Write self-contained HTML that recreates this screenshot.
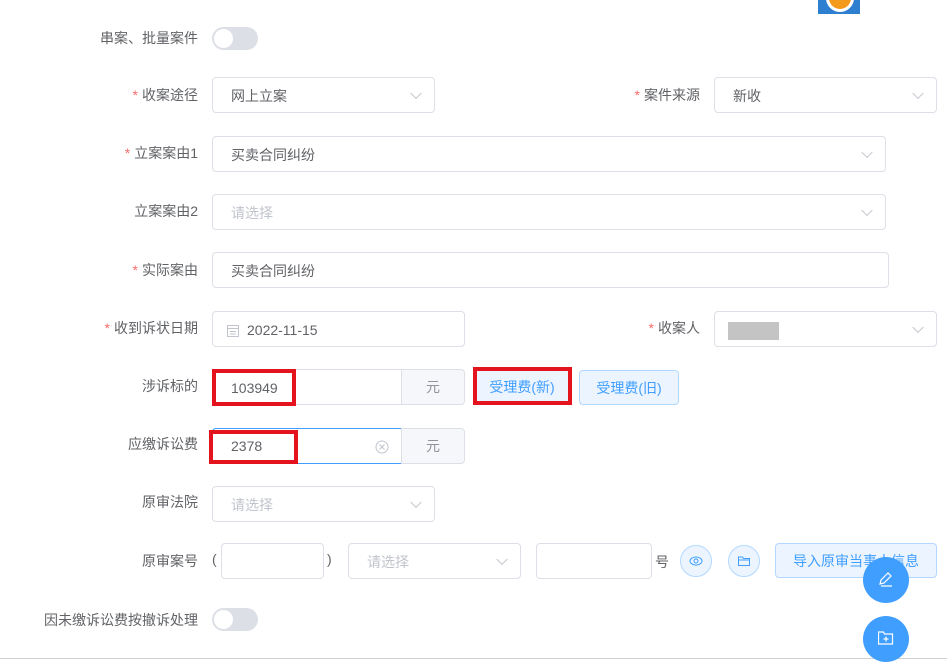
<!DOCTYPE html>
<html><head><meta charset="utf-8"><style>
*{box-sizing:border-box;margin:0;padding:0}
body{width:947px;height:661px;overflow:hidden;background:#fff;position:relative;font-family:"Liberation Sans","Noto Sans CJK SC",sans-serif;font-size:14px;color:#606266}
.a{position:absolute}
.lbl{position:absolute;text-align:right;width:190px;left:8px;color:#606266;font-size:14px}
.lbl i{color:#f56c6c;font-style:normal;margin-right:4px}
.in{position:absolute;border:1px solid #dcdfe6;border-radius:4px;background:#fff;padding-left:18px;padding-top:2px;display:flex;align-items:center;color:#606266}
.ph{color:#c0c4cc}
.arr{position:absolute;right:14px;top:50%;width:8px;height:8px;border-right:1px solid #c0c4cc;border-bottom:1px solid #c0c4cc;transform:translateY(-70%) rotate(45deg)}
.tg{position:absolute;width:46px;height:23px;border-radius:12px;background:#dcdfe6}
.tg:after{content:"";position:absolute;left:2px;top:2px;width:19px;height:19px;border-radius:50%;background:#fff}
.add{position:absolute;background:#f5f7fa;border:1px solid #dcdfe6;border-radius:0 4px 4px 0;display:flex;align-items:center;justify-content:center;color:#909399}
.btn{position:absolute;background:#ecf5ff;border:1px solid #b3d8ff;border-radius:4px;color:#409eff;display:flex;align-items:center;justify-content:center}
.red{position:absolute;border:4px solid #e4141e}
.cb{position:absolute;width:32px;height:32px;border-radius:50%;background:#ecf5ff;border:1px solid #b3d8ff}
.fab{position:absolute;width:46px;height:46px;border-radius:50%;background:#409eff}
</style></head><body>
<div class="a" style="left:818px;top:0;width:42px;height:14px;background:#2f7fd0;overflow:hidden"><div class="a" style="left:8px;top:-16px;width:28px;height:28px;border-radius:50%;background:#f39a1c;border:3px solid #fff"></div></div>

<div class="lbl" style="top:28px">串案、批量案件</div>
<div class="tg" style="left:212px;top:27px"></div>

<div class="lbl" style="top:85px"><i>*</i>收案途径</div>
<div class="in" style="left:212px;top:77px;width:223px;height:36px">网上立案<span class="arr"></span></div>
<div class="lbl" style="top:85px;left:510px"><i>*</i>案件来源</div>
<div class="in" style="left:714px;top:77px;width:223px;height:36px">新收<span class="arr"></span></div>

<div class="lbl" style="top:143px"><i>*</i>立案案由1</div>
<div class="in" style="left:212px;top:136px;width:674px;height:36px">买卖合同纠纷<span class="arr"></span></div>

<div class="lbl" style="top:201px">立案案由2</div>
<div class="in" style="left:212px;top:194px;width:674px;height:36px"><span class="ph">请选择</span><span class="arr"></span></div>

<div class="lbl" style="top:260px"><i>*</i>实际案由</div>
<div class="in" style="left:212px;top:252px;width:677px;height:36px">买卖合同纠纷</div>

<div class="lbl" style="top:318px"><i>*</i>收到诉状日期</div>
<div class="in" style="left:212px;top:311px;width:253px;height:36px;padding-left:14px"><svg width="12" height="13" style="margin-right:8px"><rect x="0.5" y="1.5" width="11" height="11" fill="none" stroke="#c0c4cc"/><line x1="0" y1="4.5" x2="12" y2="4.5" stroke="#c0c4cc"/><line x1="3" y1="7.5" x2="9" y2="7.5" stroke="#c0c4cc"/><line x1="3" y1="10" x2="9" y2="10" stroke="#c0c4cc"/></svg>2022-11-15</div>
<div class="lbl" style="top:318px;left:510px"><i>*</i>收案人</div>
<div class="in" style="left:714px;top:311px;width:223px;height:36px"><span class="arr"></span></div>
<div class="a" style="left:728px;top:322px;width:51px;height:18px;background:#c4c4c4"></div>

<div class="lbl" style="top:376px">涉诉标的</div>
<div class="in" style="left:212px;top:369px;width:190px;height:36px;border-radius:4px 0 0 4px">103949</div>
<div class="add" style="left:401px;top:369px;width:64px;height:36px">元</div>
<div class="btn" style="left:473px;top:370px;width:98px;height:34px">受理费(新)</div>
<div class="btn" style="left:579px;top:370px;width:100px;height:35px">受理费(旧)</div>
<div class="red" style="left:212px;top:369px;width:84px;height:37px"></div>
<div class="red" style="left:473px;top:367px;width:99px;height:38px"></div>

<div class="lbl" style="top:434px">应缴诉讼费</div>
<div class="in" style="left:212px;top:428px;width:190px;height:36px;border-color:#409eff;border-radius:4px 0 0 4px;padding-top:0">2378<svg class="a" style="left:162px;top:11px" width="14" height="14"><circle cx="7" cy="7" r="6" fill="none" stroke="#c0c4cc"/><path d="M4.5 4.5l5 5M9.5 4.5l-5 5" stroke="#c0c4cc"/></svg></div>
<div class="add" style="left:401px;top:428px;width:64px;height:36px">元</div>
<div class="red" style="left:209px;top:430px;width:89px;height:34px"></div>

<div class="lbl" style="top:492px">原审法院</div>
<div class="in" style="left:212px;top:486px;width:223px;height:36px"><span class="ph">请选择</span><span class="arr"></span></div>

<div class="lbl" style="top:551px">原审案号</div>
<div class="a" style="left:212px;top:551px">(</div>
<div class="in" style="left:221px;top:543px;width:103px;height:36px"></div>
<div class="a" style="left:327px;top:551px">)</div>
<div class="in" style="left:348px;top:543px;width:173px;height:36px"><span class="ph">请选择</span><span class="arr"></span></div>
<div class="in" style="left:536px;top:543px;width:116px;height:36px"></div>
<div class="a" style="left:655px;top:552px">号</div>
<div class="cb" style="left:680px;top:545px"><svg class="a" style="left:8px;top:9px" width="14" height="12"><ellipse cx="7" cy="6" rx="6" ry="4" fill="none" stroke="#409eff"/><circle cx="7" cy="6" r="2" fill="none" stroke="#409eff"/></svg></div>
<div class="cb" style="left:728px;top:545px"><svg class="a" style="left:9px;top:10px" width="12" height="10"><path d="M0.5 1h4l1 1.5h6v7h-11z M0.5 4h11" fill="none" stroke="#409eff"/></svg></div>
<div class="btn" style="left:775px;top:543px;width:162px;height:35px">导入原审当事人信息</div>

<div class="lbl" style="top:610px">因未缴诉讼费按撤诉处理</div>
<div class="tg" style="left:212px;top:608px"></div>

<div class="a" style="left:0;top:658px;width:947px;height:1px;background:#d0d0d0"></div>

<div class="fab" style="left:863px;top:557px"><svg class="a" style="left:15px;top:14px" width="16" height="18"><path d="M2 13l1-4 7-7 3 3-7 7z M3 15h11" fill="none" stroke="#fff" stroke-width="1.2"/></svg></div>
<div class="fab" style="left:863px;top:616px"><svg class="a" style="left:15px;top:15px" width="16" height="14"><path d="M0.5 1h5l1 2h8v10h-14z M8 5.5v5M5.5 8h5" fill="none" stroke="#fff" stroke-width="1.2"/></svg></div>
</body></html>
